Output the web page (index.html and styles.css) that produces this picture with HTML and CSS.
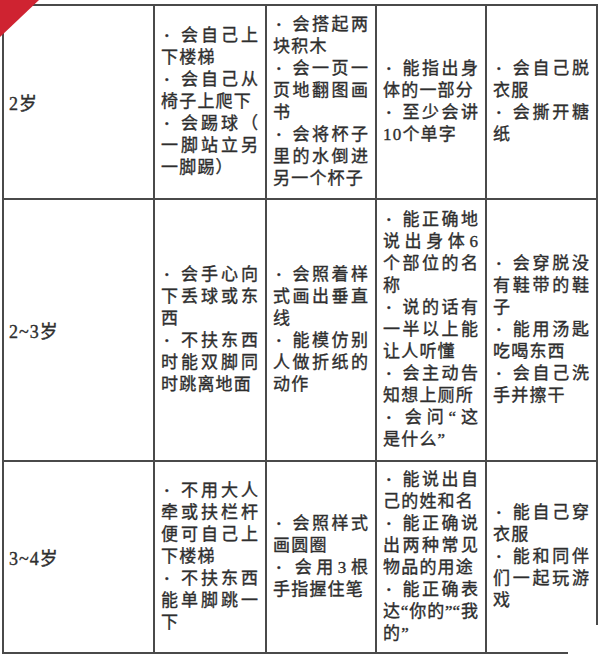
FILE: index.html
```html
<!DOCTYPE html>
<html lang="zh-CN">
<head>
<meta charset="utf-8">
<title>幼儿发展对照表</title>
<link rel="stylesheet" href="styles.css">
</head>
<body>
<div class="page">
  <table class="grid">
    <colgroup>
      <col class="c1"><col class="c2"><col class="c3"><col class="c4"><col class="c5">
    </colgroup>
    <tr class="r1">
      <td class="age">2岁</td>
      <td><div class="t">
        <span class="f"><span class="dot">·</span>会自己上</span>
        <span>下楼梯</span>
        <span class="f"><span class="dot">·</span>会自己从</span>
        <span>椅子上爬下</span>
        <span class="f"><span class="dot">·</span>会踢球（</span>
        <span class="f">一脚站立另</span>
        <span>一脚踢）</span>
      </div></td>
      <td><div class="t">
        <span class="f"><span class="dot">·</span>会搭起两</span>
        <span>块积木</span>
        <span class="f"><span class="dot">·</span>会一页一</span>
        <span class="f">页地翻图画</span>
        <span>书</span>
        <span class="f"><span class="dot">·</span>会将杯子</span>
        <span class="f">里的水倒进</span>
        <span>另一个杯子</span>
      </div></td>
      <td><div class="t">
        <span class="f"><span class="dot">·</span>能指出身</span>
        <span>体的一部分</span>
        <span class="f"><span class="dot">·</span>至少会讲</span>
        <span>10个单字</span>
      </div></td>
      <td><div class="t">
        <span class="f"><span class="dot">·</span>会自己脱</span>
        <span>衣服</span>
        <span class="f"><span class="dot">·</span>会撕开糖</span>
        <span>纸</span>
      </div></td>
    </tr>
    <tr class="r2">
      <td class="age">2~3岁</td>
      <td><div class="t">
        <span class="f"><span class="dot">·</span>会手心向</span>
        <span class="f">下丢球或东</span>
        <span>西</span>
        <span class="f"><span class="dot">·</span>不扶东西</span>
        <span class="f">时能双脚同</span>
        <span>时跳离地面</span>
      </div></td>
      <td><div class="t">
        <span class="f"><span class="dot">·</span>会照着样</span>
        <span class="f">式画出垂直</span>
        <span>线</span>
        <span class="f"><span class="dot">·</span>能模仿别</span>
        <span class="f">人做折纸的</span>
        <span>动作</span>
      </div></td>
      <td><div class="t">
        <span class="f"><span class="dot">·</span>能正确地</span>
        <span class="f">说出身体6</span>
        <span class="f">个部位的名</span>
        <span>称</span>
        <span class="f"><span class="dot">·</span>说的话有</span>
        <span class="f">一半以上能</span>
        <span>让人听懂</span>
        <span class="f"><span class="dot">·</span>会主动告</span>
        <span>知想上厕所</span>
        <span class="f"><span class="dot">·</span>会问“这</span>
        <span>是什么”</span>
      </div></td>
      <td><div class="t">
        <span class="f"><span class="dot">·</span>会穿脱没</span>
        <span class="f">有鞋带的鞋</span>
        <span>子</span>
        <span class="f"><span class="dot">·</span>能用汤匙</span>
        <span>吃喝东西</span>
        <span class="f"><span class="dot">·</span>会自己洗</span>
        <span>手并擦干</span>
      </div></td>
    </tr>
    <tr class="r3">
      <td class="age">3~4岁</td>
      <td><div class="t">
        <span class="f"><span class="dot">·</span>不用大人</span>
        <span class="f">牵或扶栏杆</span>
        <span class="f">便可自己上</span>
        <span>下楼梯</span>
        <span class="f"><span class="dot">·</span>不扶东西</span>
        <span class="f">能单脚跳一</span>
        <span>下</span>
      </div></td>
      <td><div class="t">
        <span class="f"><span class="dot">·</span>会照样式</span>
        <span>画圆圈</span>
        <span class="f"><span class="dot">·</span>会用3根</span>
        <span>手指握住笔</span>
      </div></td>
      <td><div class="t">
        <span class="f"><span class="dot">·</span>能说出自</span>
        <span>己的姓和名</span>
        <span class="f"><span class="dot">·</span>能正确说</span>
        <span class="f">出两种常见</span>
        <span>物品的用途</span>
        <span class="f"><span class="dot">·</span>能正确表</span>
        <span class="f">达“你的”“我</span>
        <span>的”</span>
      </div></td>
      <td><div class="t">
        <span class="f"><span class="dot">·</span>能自己穿</span>
        <span>衣服</span>
        <span class="f"><span class="dot">·</span>能和同伴</span>
        <span class="f">们一起玩游</span>
        <span>戏</span>
      </div></td>
    </tr>
  </table>
  <svg class="corner" width="40" height="38" viewBox="0 0 40 38" aria-hidden="true">
    <polygon points="0,0 39,0 0,37" fill="#cf2331"/>
  </svg>
  <div class="wm"></div>
</div>
</body>
</html>
```

FILE: styles.css
```css
html, body {
  margin: 0;
  padding: 0;
  background: #ffffff;
}

.page {
  position: relative;
  width: 600px;
  height: 657px;
  overflow: hidden;
  padding-top: 4px;
  box-sizing: border-box;
}

.grid {
  margin-left: 2px;
  border-collapse: collapse;
  table-layout: fixed;
  width: 596px;
  font-family: "Liberation Serif", "Noto Sans CJK SC", serif;
  font-size: 17px;
  color: #2e2e2e;
  -webkit-text-stroke: 0.35px #2e2e2e;
}

.c1 { width: 151px; }
.c2 { width: 112px; }
.c3 { width: 110px; }
.c4 { width: 110px; }
.c5 { width: 111px; }

.r1 { height: 194px; }
.r2 { height: 262px; }
.r3 { height: 192px; }

.grid td {
  border: 2px solid #4a4a4a;
  padding: 0 7px 0 6px;
  vertical-align: middle;
}

.grid td.age {
  padding-left: 5px;
  font-size: 18px;
  letter-spacing: 1px;
}

.t {
  line-height: 22px;
}

.t > span {
  display: block;
  white-space: nowrap;
  letter-spacing: 1.2px;
  text-align: left;
}

.t > span.f {
  text-align: justify;
  text-align-last: justify;
  letter-spacing: 0;
}

.dot {
  display: inline-block;
  width: 17px;
  padding-left: 3px;
  box-sizing: border-box;
  text-align: center;
  font-weight: bold;
}

.corner {
  position: absolute;
  left: 0;
  top: 0;
  display: block;
}

.wm {
  position: absolute;
  left: 568px;
  top: 625px;
  width: 32px;
  height: 32px;
  background: #ffffff;
}
```
